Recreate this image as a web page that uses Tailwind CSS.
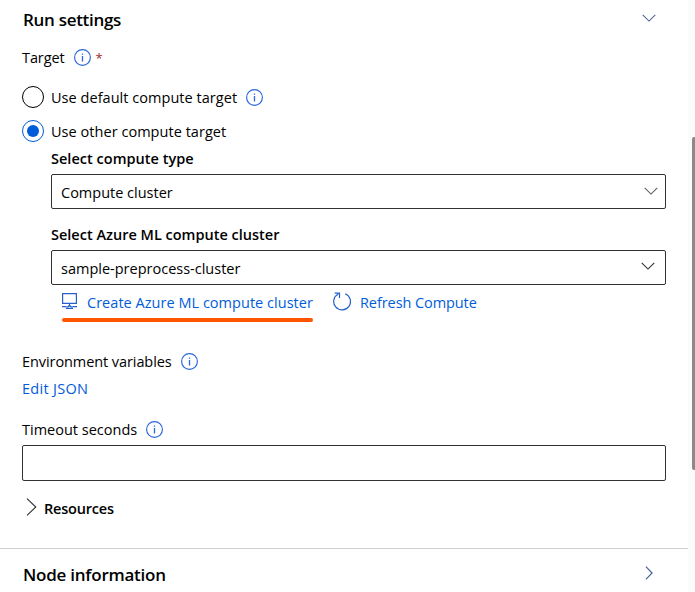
<!DOCTYPE html>
<html lang="en">
<head>
<meta charset="utf-8">
<title>Run settings</title>
<script src="https://cdn.jsdelivr.net/npm/@tailwindcss/browser@4"></script>
</head>
<body class="bg-white">
<svg class="hidden">
  <symbol id="info" viewBox="0 0 18 18"><circle cx="8.5" cy="8.5" r="7.9" fill="none" stroke="#2b66dc" stroke-width="1.15"/><path d="M8.5 7V12.4M8.5 4.4V5.8" stroke="#2b66dc" stroke-width="1.3" fill="none"/></symbol>
  <symbol id="chev" viewBox="0 0 14 8"><path d="M.7 .9L7 7.1L13.3 .9" fill="none" stroke="currentColor" stroke-width="1.1"/></symbol>
</svg>
<div class="flex h-[592px] w-[695px] overflow-hidden font-['Open_Sans','Noto_Sans',sans-serif] text-[14.5px] leading-5 text-black whitespace-nowrap">
  <main class="w-[688px]">
    <section class="h-[548px] pl-[22px] pr-[22px]">
      <header class="flex h-10 items-center justify-between pr-[10px] text-[17px] font-semibold">
        <h2 class="pl-px tracking-[-0.3px]">Run settings</h2>
        <svg class="mb-1 h-2 w-[14px] text-[#4a6796]"><use href="#chev"/></svg>
      </header>
      <div class="flex h-[35px] items-center">
        <span class="tracking-[-0.1px]">Target</span>
        <svg class="ml-[9px] size-[18px]"><use href="#info"/></svg>
        <span class="ml-1 text-[#a4262c] text-[13px]">*</span>
      </div>
      <div class="mt-[5px] flex h-[34px] items-center">
        <span class="size-[22px] rounded-full border border-black"></span>
        <span class="ml-[7px] pt-[2px] tracking-[0.04px]">Use default compute target</span>
        <svg class="ml-[9px] mt-px size-[18px]"><use href="#info"/></svg>
      </div>
      <div class="flex h-[34px] items-center">
        <span class="flex size-[22px] items-center justify-center rounded-full border border-[#015cda]"><span class="size-3 rounded-full bg-[#015cda]"></span></span>
        <span class="ml-[7px] pt-[2px] tracking-[0.04px]">Use other compute target</span>
      </div>
      <div class="pl-[29px]">
        <div class="flex h-[26px] items-start pt-px font-semibold"><span class="tracking-[0.02px]">Select compute type</span></div>
        <div class="flex h-[35px] items-center justify-between rounded-[2px] border border-[#323130] pl-[9px] pr-[7px]">
          <span class="pt-[2px]">Compute cluster</span><svg class="mb-px h-2 w-[14px] text-[#605e5c]"><use href="#chev"/></svg>
        </div>
        <div class="mt-[15px] flex h-[26px] items-start pt-px font-semibold"><span>Select Azure ML compute cluster</span></div>
        <div class="flex h-[35px] items-center justify-between rounded-[2px] border border-[#323130] pl-[9px] pr-[10px]">
          <span class="pt-[2px]">sample-preprocess-cluster</span><svg class="mb-[3px] h-2 w-[14px] text-[#323130]"><use href="#chev"/></svg>
        </div>
        <div class="flex h-[37px] pl-[11px] text-[#015cda]">
          <a class="flex h-[37px] w-[251px] flex-col justify-between">
            <span class="flex h-[33px] items-center">
              <svg class="mb-px h-4 w-[15px]" viewBox="0 0 15 16" fill="none" stroke="#2560cc" stroke-width="1.2"><path d="M.6 .6H14.4V10.4H.6ZM7.5 10.5V12.5M0 13.6H4.6M10.4 13.6H15M4 15.3H11"/><path d="M7.5 11.4L11 14.6H9L7.5 13.4L6 14.6H4Z" fill="#2560cc" stroke="none"/></svg>
              <span class="ml-[10px] pt-[2px] tracking-[0.03px]">Create Azure ML compute cluster</span>
            </span>
            <span class="h-1 w-[251px] rounded-full bg-[#ff5500]"></span>
          </a>
          <a class="ml-[20px] flex h-[35px] items-center">
            <svg class="mb-[3px] h-[19px] w-[18px]" viewBox="0 0 18 19" fill="none" stroke="#2560cc" stroke-width="1.2"><path d="M12.2 1.7A8.4 8.4 0 1 1 5.3 2M1.7 1.2H6.5V6"/></svg>
            <span class="ml-[9px] tracking-[-0.08px]">Refresh Compute</span>
          </a>
        </div>
      </div>
      <div class="mt-[30px] flex h-5 items-center">
        <span class="tracking-[-0.08px]">Environment variables</span>
        <svg class="ml-[9px] size-[18px]"><use href="#info"/></svg>
      </div>
      <div class="mt-[7px] h-5 tracking-[0.3px] text-[#015cda]"><a>Edit JSON</a></div>
      <div class="mt-[21px] flex h-5 items-center">
        <span>Timeout seconds</span>
        <svg class="ml-[9px] size-[18px]"><use href="#info"/></svg>
      </div>
      <div class="mt-[5px] h-9 rounded-[2px] border border-[#323130]"></div>
      <div class="mt-[18px] flex h-5 items-center pl-1 font-semibold">
        <svg class="mb-1 h-[18px] w-[11px]" viewBox="0 0 11 18" fill="none" stroke="#323130" stroke-width="1.1"><path d="M1 .7L9.8 9L1 17.3"/></svg>
        <span class="ml-[7px] tracking-[-0.2px]">Resources</span>
      </div>
    </section>
    <section class="flex h-11 items-center justify-between border-t border-[#d2d0ce] pl-[22px] pr-[35px] pt-[9px] text-[17px] font-semibold">
      <h2 class="pl-px tracking-[-0.24px]">Node information</h2>
      <svg class="mb-1 h-[14px] w-2" viewBox="0 0 8 14" fill="none" stroke="#3c5a91" stroke-width="1.1"><path d="M.9 .7L7.1 7L.9 13.3"/></svg>
    </section>
  </main>
  <aside class="w-[7px] bg-[#fbfbfb] pl-1 pt-[137px]"><div class="h-[333px] w-[3px] rounded-l-[2px] bg-[#8a8a8a]"></div></aside>
</div>
</body>
</html>
